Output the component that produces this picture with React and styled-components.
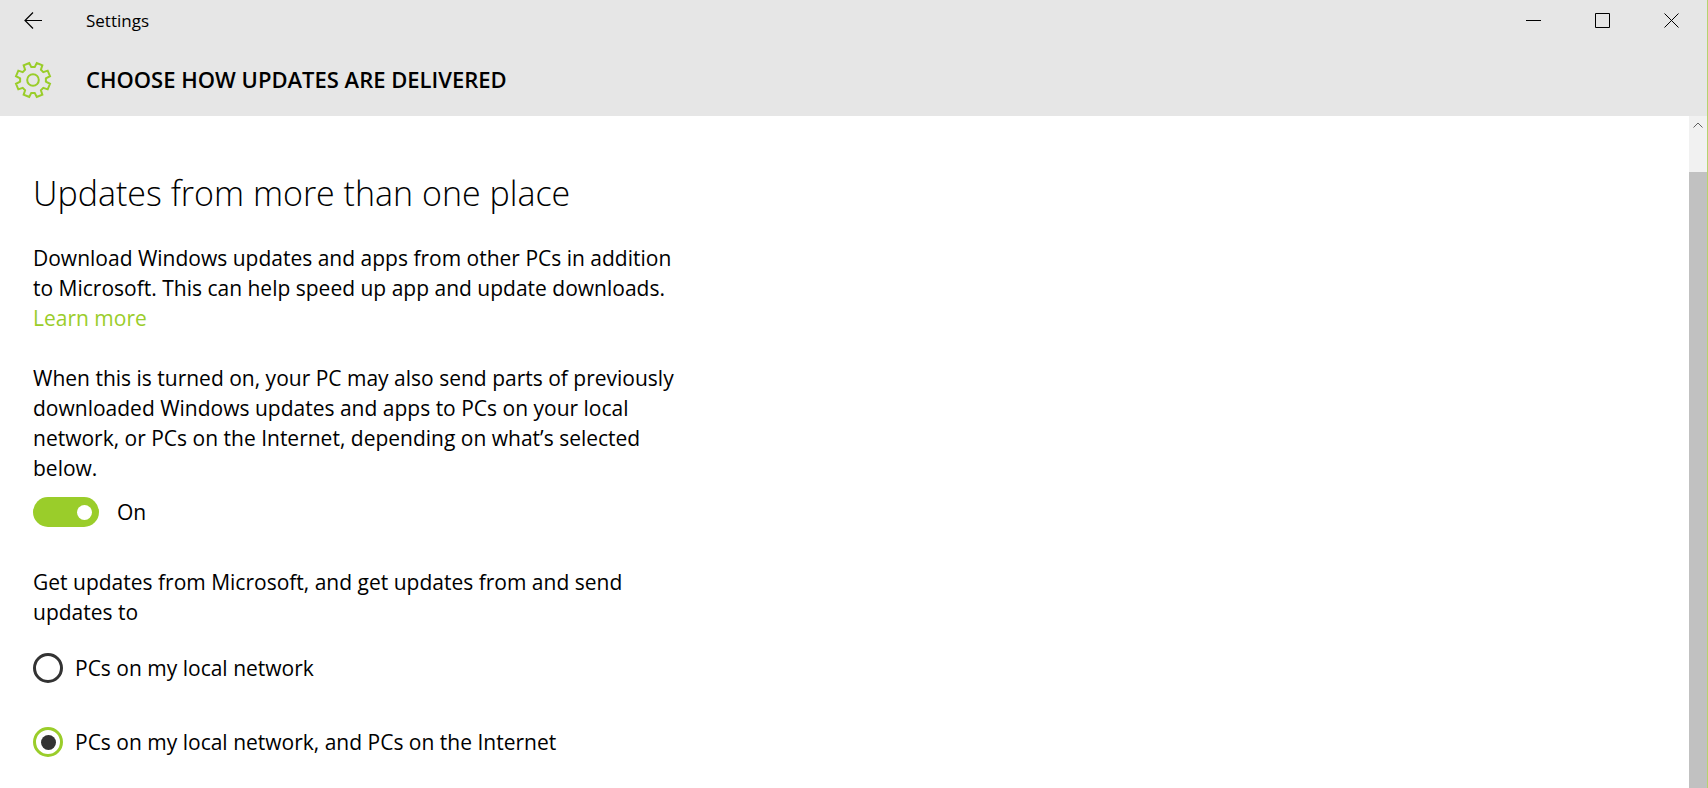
import React, { useState } from "react";
import styled, { createGlobalStyle } from "styled-components";

const ACCENT = "#9acd2a";

const GlobalStyle = createGlobalStyle`
  * { box-sizing: border-box; }
  body {
    margin: 0;
    background: #fff;
    color: #000;
    font-family: "Segoe UI", "Open Sans", "Noto Sans", sans-serif;
    font-size: 21px;
    line-height: 30px;
  }
`;

const Window = styled.div`
  display: flex;
  flex-direction: column;
  min-height: 100vh;
  border-right: 1px solid #b5d46f;
`;

const Header = styled.header`
  background: #e6e6e6;
`;

const TitleBar = styled.div`
  display: flex;
  align-items: center;
  height: 41px;
  padding-right: 1px;
`;

const IconButton = styled.button`
  display: flex;
  align-items: center;
  justify-content: center;
  width: ${(p) => p.$width}px;
  height: 41px;
  padding: 0;
  border: 0;
  background: transparent;
  color: #000;
`;

const AppName = styled.span`
  flex: 1;
  padding-left: 20px;
  font-size: 17px;
`;

const PageBar = styled.div`
  display: flex;
  align-items: center;
  height: 75px;
  padding: 3px 0 0 14px;
  gap: 34px;
`;

const PageTitle = styled.h1`
  margin: 0;
  padding-bottom: 2px;
  font-size: 22px;
  line-height: 30px;
  font-weight: 600;
`;

const Body = styled.div`
  display: flex;
  flex: 1;
`;

const Content = styled.main`
  flex: 1;
  padding: 53px 33px 0;
`;

const Column = styled.div`
  max-width: 656px;
`;

const SectionTitle = styled.h2`
  margin: 0 0 26px;
  font-size: 34px;
  line-height: 48px;
  font-weight: 300;
`;

const Paragraph = styled.p`
  margin: 0 0 ${(p) => p.$gap}px;
`;

const Link = styled.a`
  color: ${ACCENT};
  text-decoration: none;
`;

const SwitchRow = styled.label`
  display: flex;
  align-items: center;
  gap: 18px;
  margin-bottom: 40px;
`;

const Switch = styled.input`
  appearance: none;
  display: flex;
  align-items: center;
  justify-content: flex-end;
  width: 66px;
  height: 30px;
  margin: 0;
  padding: 0 7px;
  border-radius: 15px;
  background: ${ACCENT};

  &::before {
    content: "";
    width: 15px;
    height: 15px;
    border-radius: 50%;
    background: #fff;
  }

  &:not(:checked) {
    justify-content: flex-start;
    background: #999;
  }
`;

const Options = styled.fieldset`
  margin: 0;
  padding: 0;
  border: 0;
`;

const Legend = styled.legend`
  padding: 0;
  margin-bottom: 26px;
`;

const Option = styled.label`
  display: flex;
  align-items: center;
  gap: 12px;
  margin-bottom: 44px;

  &:last-child {
    margin-bottom: 0;
  }
`;

const Radio = styled.input`
  appearance: none;
  display: grid;
  place-items: center;
  width: 30px;
  height: 30px;
  margin: 0;
  border: 3px solid #333;
  border-radius: 50%;

  &:checked {
    border-color: ${ACCENT};
  }

  &:checked::before {
    content: "";
    width: 15px;
    height: 15px;
    border-radius: 50%;
    background: #333;
  }
`;

const ScrollBar = styled.div`
  display: flex;
  flex-direction: column;
  width: 18px;
  background: #f1f1f1;
`;

const ScrollUp = styled.button`
  display: flex;
  justify-content: center;
  height: 56px;
  padding: 6px 0 0;
  border: 0;
  background: transparent;
`;

const ScrollThumb = styled.div`
  flex: 1;
  background: #c1c1c1;
`;

const TEETH = 8;

function gearPath(center, outer, inner) {
  const point = (radius, degrees) => {
    const a = (degrees * Math.PI) / 180;
    return `${(center + radius * Math.sin(a)).toFixed(2)} ${(center - radius * Math.cos(a)).toFixed(2)}`;
  };
  const step = 360 / TEETH;
  const points = [];
  for (let i = 0; i < TEETH; i += 1) {
    const mid = step / 2 + i * step;
    points.push(point(inner, mid - 15), point(outer, mid - 10), point(outer, mid + 10), point(inner, mid + 15));
  }
  return `M${points.join("L")}Z`;
}

const Gear = () => (
  <svg width="38" height="38" viewBox="0 0 38 38" fill="none" stroke={ACCENT} strokeWidth="2" aria-hidden="true">
    <path d={gearPath(19, 17.4, 13)} />
    <circle cx="19" cy="19" r="5.8" />
  </svg>
);

const BackIcon = () => (
  <svg width="18" height="17" viewBox="0 0 18 17" fill="none" stroke="currentColor" aria-hidden="true">
    <path d="M18 8.5H1M9 0.5L1 8.5L9 16.5" strokeWidth="1.2" />
  </svg>
);

const windowIcons = {
  Minimize: "M0 7.5H15",
  Maximize: "M0.5 0.5H14.5V14.5H0.5Z",
  Close: "M0.5 0.5L14.5 14.5M14.5 0.5L0.5 14.5",
};

const options = ["PCs on my local network", "PCs on my local network, and PCs on the Internet"];

export default function App() {
  const [on, setOn] = useState(true);
  const [choice, setChoice] = useState(1);

  return (
    <>
      <GlobalStyle />
      <Window>
        <Header>
          <TitleBar>
            <IconButton $width={66} aria-label="Back">
              <BackIcon />
            </IconButton>
            <AppName>Settings</AppName>
            {Object.entries(windowIcons).map(([name, d]) => (
              <IconButton key={name} $width={69} aria-label={name}>
                <svg width="15" height="15" viewBox="0 0 15 15" fill="none" stroke="currentColor" aria-hidden="true">
                  <path d={d} />
                </svg>
              </IconButton>
            ))}
          </TitleBar>
          <PageBar>
            <Gear />
            <PageTitle>CHOOSE HOW UPDATES ARE DELIVERED</PageTitle>
          </PageBar>
        </Header>
        <Body>
          <Content>
            <Column>
              <SectionTitle>Updates from more than one place</SectionTitle>
              <Paragraph $gap={30}>
                Download Windows updates and apps from other PCs in addition to Microsoft. This can help speed up app
                and update downloads. <Link href="#learn-more">Learn more</Link>
              </Paragraph>
              <Paragraph $gap={14}>
                When this is turned on, your PC may also send parts of previously downloaded Windows updates and apps
                to PCs on your local network, or PCs on the Internet, depending on what’s selected below.
              </Paragraph>
              <SwitchRow>
                <Switch type="checkbox" role="switch" checked={on} onChange={() => setOn(!on)} />
                {on ? "On" : "Off"}
              </SwitchRow>
              <Options>
                <Legend>Get updates from Microsoft, and get updates from and send updates to</Legend>
                {options.map((label, i) => (
                  <Option key={label}>
                    <Radio type="radio" name="source" checked={choice === i} onChange={() => setChoice(i)} />
                    {label}
                  </Option>
                ))}
              </Options>
            </Column>
          </Content>
          <ScrollBar>
            <ScrollUp aria-label="Scroll up">
              <svg width="10" height="6" viewBox="0 0 10 6" fill="none" stroke="#606060" aria-hidden="true">
                <path d="M0.5 5.5L5 1L9.5 5.5" />
              </svg>
            </ScrollUp>
            <ScrollThumb />
          </ScrollBar>
        </Body>
      </Window>
    </>
  );
}
